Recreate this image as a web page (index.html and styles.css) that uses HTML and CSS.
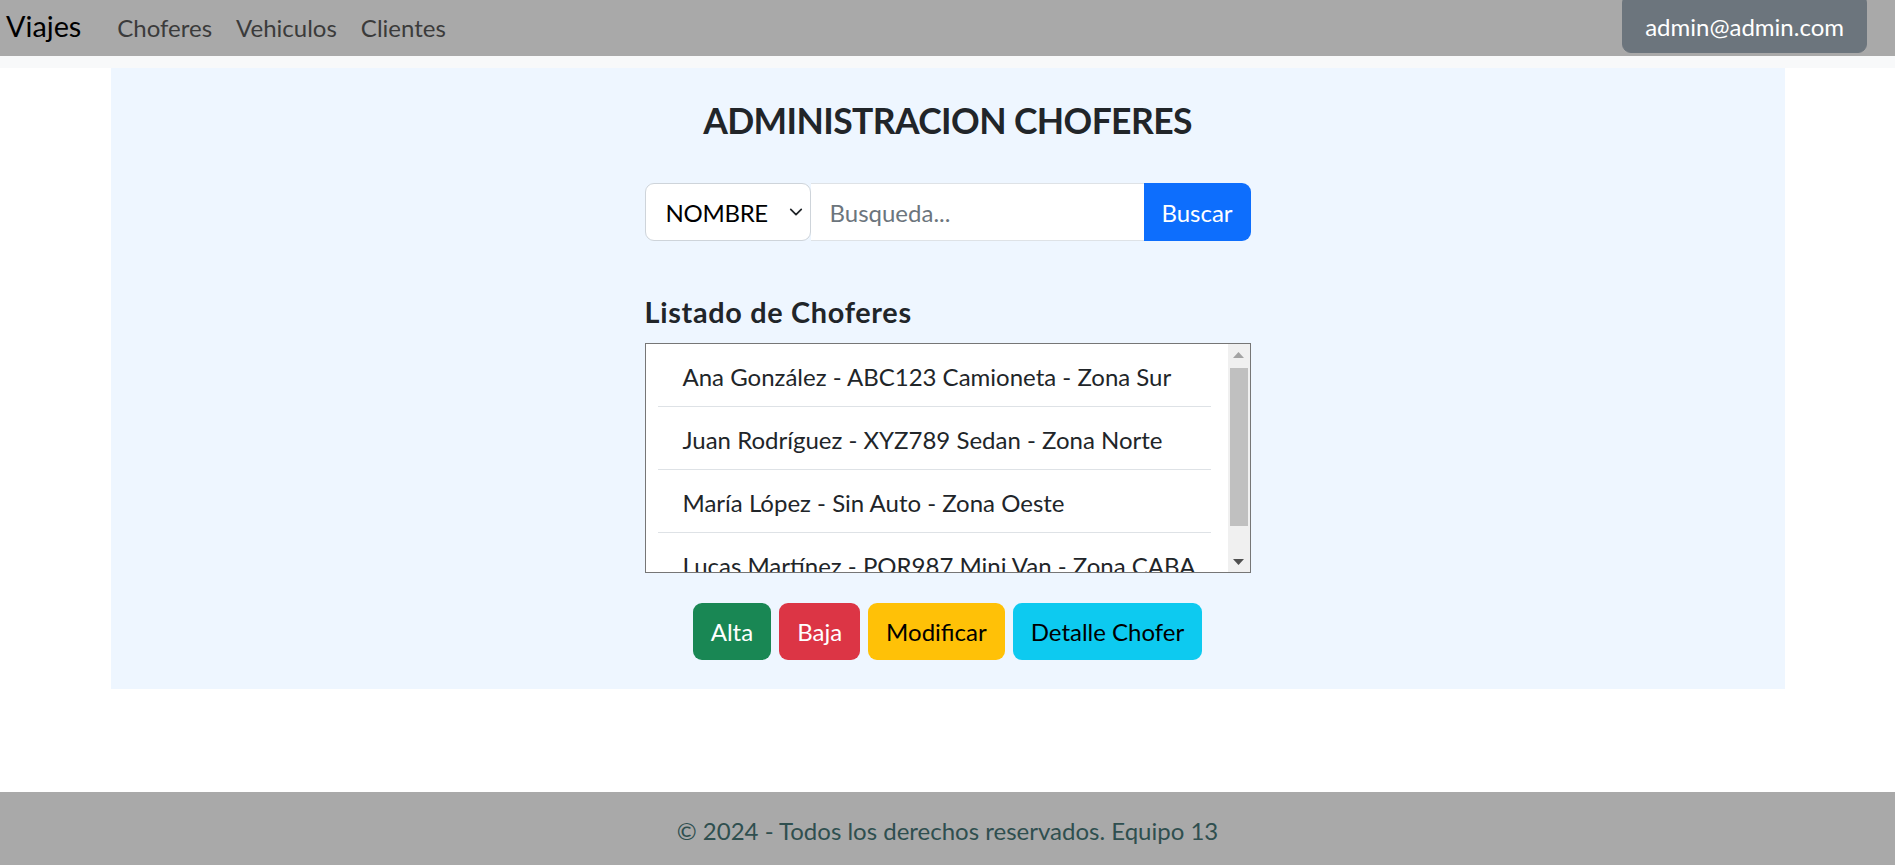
FILE: index.html
```html
<!DOCTYPE html>
<html lang="es">
<head>
<meta charset="utf-8">
<title>Viajes - Administracion Choferes</title>
<link rel="stylesheet" href="styles.css">
</head>
<body>
<nav class="navbar">
  <a class="brand" href="#">Viajes</a>
  <ul class="nav-links">
    <li><a href="#">Choferes</a></li>
    <li><a href="#">Vehiculos</a></li>
    <li><a href="#">Clientes</a></li>
  </ul>
  <button class="user-btn" type="button">admin@admin.com</button>
</nav>
<div class="strip"></div>
<main class="main">
  <section class="panel">
    <div class="panel-inner">
      <h2 class="title">ADMINISTRACION CHOFERES</h2>
      <form class="search-group">
        <div class="select-wrap">
          <select class="search-select">
            <option>NOMBRE</option>
            <option>ZONA</option>
          </select>
          <svg class="chevron" width="14" height="14" viewBox="0 0 16 16"><path d="M2 5l6 6 6-6" fill="none" stroke="#212529" stroke-width="2" stroke-linecap="round" stroke-linejoin="round"/></svg>
        </div>
        <input class="search-input" type="text" placeholder="Busqueda...">
        <button class="search-btn" type="button">Buscar</button>
      </form>
      <h4 class="list-title">Listado de Choferes</h4>
      <div class="list-box">
        <div class="list-scroll">
          <ul class="list-group">
            <li class="list-item">Ana González - ABC123 Camioneta - Zona Sur</li>
            <li class="list-item">Juan Rodríguez - XYZ789 Sedan - Zona Norte</li>
            <li class="list-item">María López - Sin Auto - Zona Oeste</li>
            <li class="list-item">Lucas Martínez - PQR987 Mini Van - Zona CABA</li>
          </ul>
        </div>
        <div class="scrollbar">
          <div class="sb-btn">
            <svg width="11" height="6" viewBox="0 0 11 6"><polygon points="0,6 11,6 5.5,0" fill="#a3a3a3"/></svg>
          </div>
          <div class="sb-track"><div class="sb-thumb"></div></div>
          <div class="sb-btn">
            <svg width="11" height="6" viewBox="0 0 11 6"><polygon points="0,0 11,0 5.5,6" fill="#505050"/></svg>
          </div>
        </div>
      </div>
      <div class="actions">
        <button class="btn btn-success" type="button">Alta</button>
        <button class="btn btn-danger" type="button">Baja</button>
        <button class="btn btn-warning" type="button">Modificar</button>
        <button class="btn btn-info" type="button">Detalle Chofer</button>
      </div>
    </div>
  </section>
</main>
<footer class="footer">© 2024 - Todos los derechos reservados. Equipo 13</footer>
</body>
</html>
```
FILE: styles.css
```css
* { box-sizing: border-box; }
html, body { height: 100%; }
body {
  margin: 0;
  font-family: Lato, "Open Sans", sans-serif;
  color: #212529;
  background: #fff;
  display: flex;
  flex-direction: column;
  overflow: hidden;
}

/* NAVBAR */
.navbar {
  height: 56px;
  flex: 0 0 56px;
  background: #a9a9a9;
  display: flex;
  align-items: center;
  padding: 0 28px 0 6px;
}
.brand {
  font-size: 28.8px;
  line-height: 1.5;
  color: #000;
  text-decoration: none;
  margin-right: 24px;
  padding-bottom: 2px;
}
.nav-links {
  list-style: none;
  display: flex;
  margin: 0;
  padding: 0;
  flex: 1;
}
.nav-links a {
  display: block;
  font-size: 24px;
  line-height: 36px;
  padding: 0 12px;
  color: #3b3b3b;
  text-decoration: none;
}
.user-btn {
  align-self: flex-start;
  margin-top: -6px;
  height: 59px;
  padding: 6px 22px 0;
  background: #6c757d;
  color: #fff;
  border: 1px solid #6c757d;
  border-radius: 9px;
  font-family: inherit;
  font-size: 24px;
  line-height: 36px;
}

.strip { height: 12px; flex: 0 0 12px; background: #f8f9fa; }

/* MAIN */
.main { flex: 1; }
.panel {
  width: 1674px;
  margin: 0 auto;
  background: #eef6ff;
  padding: 30px 0 29px;
}
.panel-inner {
  width: 606px;
  margin: 0 auto;
}
.title {
  margin: 0 0 39px;
  text-align: center;
  font-size: 35.5px;
  line-height: 46px;
  font-weight: 700;
  letter-spacing: -0.6px;
  color: #212529;
  white-space: nowrap;
}

/* SEARCH */
.search-group {
  display: flex;
  height: 58px;
  margin: 0;
}
.select-wrap {
  position: relative;
  width: 166px;
  flex: 0 0 166px;
}
.search-select {
  appearance: none;
  -webkit-appearance: none;
  width: 100%;
  height: 100%;
  border: 1px solid #ced4da;
  border-radius: 9px;
  background: #fff;
  font-family: inherit;
  font-size: 24px;
  color: #000;
  padding: 0 0 0 20px;
  letter-spacing: -0.3px;
}
.chevron {
  position: absolute;
  right: 8px;
  top: 22px;
  pointer-events: none;
}
.search-input {
  flex: 1 1 0;
  width: 0;
  min-width: 0;
  height: 100%;
  border: 1px solid #dee2e6;
  border-left: none;
  border-right: none;
  border-radius: 0;
  background: #fff;
  font-family: inherit;
  font-size: 24px;
  padding: 0 19px;
  color: #212529;
  outline: none;
}
.search-input::placeholder { color: #6c757d; }
.search-btn {
  flex: 0 0 107px;
  width: 107px;
  height: 100%;
  background: #0d6efd;
  color: #fff;
  border: none;
  border-radius: 0 9px 9px 0;
  font-family: inherit;
  font-size: 24px;
}

/* LIST */
.list-title {
  margin: 54px 0 13px;
  font-size: 28.8px;
  line-height: 35px;
  font-weight: 700;
  letter-spacing: 0.7px;
  color: #212529;
}
.list-box {
  height: 230px;
  border: 1px solid #767676;
  background: #fff;
  display: flex;
}
.list-scroll {
  flex: 1;
  overflow: hidden;
  padding: 0 17px 0 12px;
}
.list-group {
  list-style: none;
  margin: 0;
  padding: 0;
}
.list-item {
  font-size: 24px;
  line-height: 36px;
  padding: 15px 25px 11px;
  border-bottom: 1px solid #dee2e6;
  white-space: nowrap;
}
.list-item:last-child { border-bottom: none; }

.scrollbar {
  flex: 0 0 22px;
  width: 22px;
  background: #f0f0f0;
  display: flex;
  flex-direction: column;
}
.sb-btn {
  flex: 0 0 21px;
  display: flex;
  align-items: center;
  justify-content: center;
}
.sb-track {
  flex: 1;
  padding: 3px 2px 0;
}
.sb-thumb {
  height: 158px;
  background: #c0c0c0;
}

/* ACTIONS */
.actions {
  display: flex;
  justify-content: center;
  gap: 8px;
  margin-top: 30px;
}
.btn {
  height: 57px;
  padding: 0 17px;
  border: 1px solid transparent;
  border-radius: 9px;
  font-family: inherit;
  font-size: 24px;
  line-height: 36px;
}
.btn-success { background: #198754; color: #fff; }
.btn-danger { background: #dc3545; color: #fff; }
.btn-warning { background: #ffc107; color: #000; }
.btn-info { background: #0dcaf0; color: #000; }

/* FOOTER */
.footer {
  flex: 0 0 73px;
  height: 73px;
  background: #a9a9a9;
  color: #2f4f4f;
  text-align: center;
  font-size: 24px;
  line-height: 36px;
  padding-top: 21px;
}
```
